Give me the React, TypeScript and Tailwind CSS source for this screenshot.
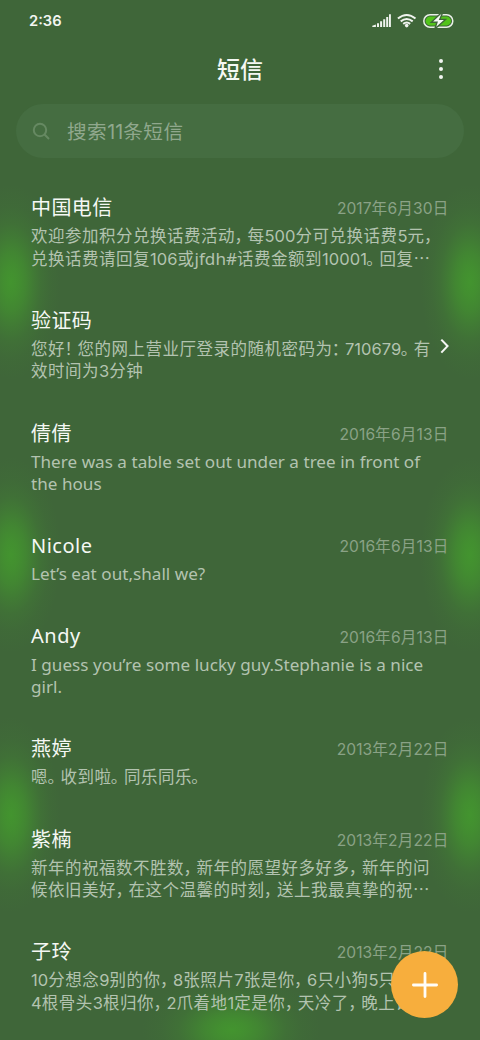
import React from "react";

type Message = {
  name: string;
  date?: string;
  lines: string[];
  arrow?: boolean;
};

const messages: Message[] = [
  {
    name: "中国电信",
    date: "2017年6月30日",
    lines: ["欢迎参加积分兑换话费活动，每500分可兑换话费5元，", "兑换话费请回复106或jfdh#话费金额到10001。回复…"],
  },
  { name: "验证码", arrow: true, lines: ["您好！您的网上营业厅登录的随机密码为：710679。有", "效时间为3分钟"] },
  { name: "倩倩", date: "2016年6月13日", lines: ["There was a table set out under a tree in front of", "the hous"] },
  { name: "Nicole", date: "2016年6月13日", lines: ["Let’s eat out,shall we?"] },
  { name: "Andy", date: "2016年6月13日", lines: ["I guess you’re some lucky guy.Stephanie is a nice", "girl."] },
  { name: "燕婷", date: "2013年2月22日", lines: ["嗯。收到啦。同乐同乐。"] },
  {
    name: "紫楠",
    date: "2013年2月22日",
    lines: ["新年的祝福数不胜数，新年的愿望好多好多，新年的问", "候依旧美好，在这个温馨的时刻，送上我最真挚的祝…"],
  },
  {
    name: "子玲",
    date: "2013年2月22日",
    lines: ["10分想念9别的你，8张照片7张是你，6只小狗5只小", "4根骨头3根归你，2爪着地1定是你，天冷了，晚上记"],
  },
];

/* Digits, Latin words and full-width punctuation each get their own metrics. */
function Mixed({ text }: { text: string }) {
  const parts = text.match(/[0-9]+|[，。！：…]|[\x20-\x2f\x3a-\x7e’]+|[^\x20-\x7e，。！：…’]+/g) ?? [];
  return (
    <>
      {parts.map((p, i) => {
        if (/^[0-9]/.test(p)) return <span key={i} className="font-['Inter'] tracking-[0.05px]">{p}</span>;
        if (p === "…") return <span key={i}>{p}</span>;
        if (/^[，。！：]/.test(p))
          return (
            <span key={i} className="-ml-[0.6px] pr-[4.3px] [font-feature-settings:'halt']">
              {p}
            </span>
          );
        if (/^[\x20-\x7e’]/.test(p))
          return <span key={i} className="font-['Noto_Sans'] text-[17.1px] leading-none tracking-[0.02px]">{p}</span>;
        return <span key={i}>{p}</span>;
      })}
    </>
  );
}

function Row({ m }: { m: Message }) {
  return (
    <li className="flex flex-col pb-[35.6px]">
      <div className="flex h-[30px] items-center justify-between">
        <h2 className="text-[20px] leading-[30px] tracking-[0.4px] text-[#f5f8f4]">
          {/^[A-Z]/.test(m.name) ? <span className="font-['Noto_Sans'] tracking-[0.5px]">{m.name}</span> : m.name}
        </h2>
        {m.date && (
          <time className="-mr-[0.5px] pt-[2px] text-[15.6px] leading-[28px] tracking-[0.25px] text-[#8aa286]">
            <Mixed text={m.date} />
          </time>
        )}
      </div>
      <div className="mt-[2px] flex items-start justify-between">
        <div className="w-[400px] shrink-0 text-[16.5px] leading-[22.6px] tracking-[0.5px] whitespace-nowrap text-[#b3c3b0]">
          {m.lines.map((l) => (
            <p key={l} className="h-[22.6px]">
              <Mixed text={l} />
            </p>
          ))}
        </div>
        {m.arrow && (
          <svg className="-mr-[1.5px] shrink-0" width="10" height="18" viewBox="1 0 10 18" fill="none">
            <path d="M2.3 2.6 L8.5 9.1 L2.3 15.6" stroke="#f3f6f2" strokeWidth="2.1" />
          </svg>
        )}
      </div>
    </li>
  );
}

function StatusBar() {
  return (
    <div className="flex h-[42px] items-center justify-between pr-[26px] pl-[29px]">
      <span className="font-['Inter'] text-[14.7px] font-semibold text-[#f3f6f2]">2:36</span>
      <svg width="83" height="16" viewBox="371 13 83 16" fill="none">
        <g fill="#f0f4ef">
          <path d="M372.3 27 V25.7 L375.9 24.6 V27Z M377 23.2h2v3.8h-2z M380.1 21.3h2v5.7h-2z M383.2 19.2h2v7.8h-2z M386.2 17h2v10h-2z M389 14.3h1.9V27H389z" />
          <circle cx="406.7" cy="25.6" r="1.8" />
        </g>
        <g stroke="#f0f4ef" strokeWidth="2">
          <path d="M397.9 18.6 Q406.7 11.4 415.5 18.6" />
          <path d="M400.7 21.4 Q406.7 16.6 412.7 21.4" />
          <path d="M403.2 23.9 Q406.7 21.2 410.2 23.9" />
        </g>
        <rect x="423.8" y="14.8" width="29" height="12.4" rx="6.2" stroke="#e9f0e7" strokeWidth="1.5" />
        <rect x="425.6" y="16.6" width="25.4" height="8.8" rx="4.4" fill="#52c41a" />
        <path d="M441.2 13 L431.3 22.2 H437 L434.8 29 L445.5 19.4 H439.8 L442.5 13Z" fill="#f7faf6" stroke="#3f6639" strokeWidth="1.4" />
      </svg>
    </div>
  );
}

export default function App() {
  return (
    <main className="relative h-[1040px] w-[480px] overflow-hidden bg-[#3f6639] bg-[radial-gradient(50px_98px_at_11px_282px,var(--glow)),radial-gradient(50px_98px_at_11px_555px,var(--glow)),radial-gradient(50px_98px_at_11px_815px,var(--glow)),radial-gradient(50px_98px_at_470px_282px,var(--glow)),radial-gradient(50px_98px_at_470px_555px,var(--glow)),radial-gradient(50px_98px_at_470px_815px,var(--glow)),radial-gradient(90px_56px_at_232px_1030px,var(--glow))] font-['Noto_Sans_CJK_SC',sans-serif] [--glow:#43942f_0%,#43942fe0_15%,#43942fb0_30%,#43942f70_45%,#43942f38_60%,#43942f14_78%,#43942f00_100%]">
      <StatusBar />
      <header className="grid h-[62px] grid-cols-[1fr_auto_1fr] items-center pb-[8px]">
        <h1 className="col-start-2 pb-[2px] text-[23px] leading-[34px] font-medium text-[#f5f8f4]">短信</h1>
        <svg className="mr-[35px] justify-self-end" width="8" height="24" viewBox="0 0 8 24" fill="#f3f6f2">
          <circle cx="4" cy="4" r="2" />
          <circle cx="4" cy="12" r="2" />
          <circle cx="4" cy="20" r="2" />
        </svg>
      </header>
      <div className="mx-[16px] flex h-[54px] items-center rounded-full bg-[#456d41] pl-[16px]">
        <svg width="18" height="18" viewBox="0 0 18 18" fill="none" stroke="#668962" strokeWidth="2">
          <circle cx="8" cy="8" r="6.2" />
          <path d="M12.3 12.3 L17 17" />
        </svg>
        <span className="ml-[17px] pt-[2px] text-[19.6px] tracking-[0.5px] text-[#90a88d]">
          <Mixed text="搜索11条短信" />
        </span>
      </div>
      <ul className="mr-[32px] ml-[31px] pt-[34px]">
        {messages.map((m) => (
          <Row key={m.name} m={m} />
        ))}
      </ul>
      <button className="absolute right-[22px] bottom-[22px] flex size-[67px] items-center justify-center rounded-full bg-[#f7ae3d]" aria-label="新建">
        <svg width="28" height="28" viewBox="0 0 28 28" stroke="#fffdf8" strokeWidth="2.8" strokeLinecap="round">
          <path d="M14 2.4V25.6M2.4 14H25.6" />
        </svg>
      </button>
    </main>
  );
}
